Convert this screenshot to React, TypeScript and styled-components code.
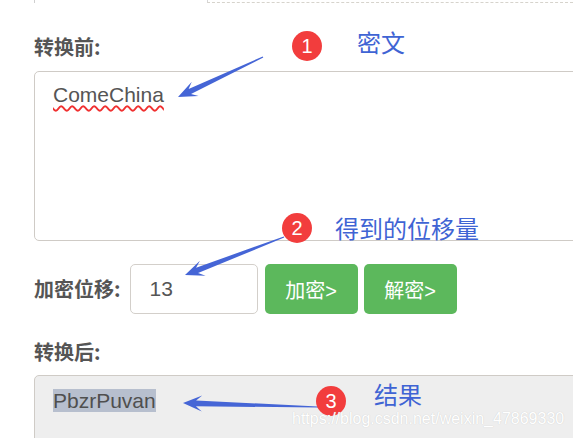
import React from "react";
import styled, { createGlobalStyle } from "styled-components";

type Pt = [number, number];

const arrowPoints = (tail: Pt, tip: Pt) => {
  const dx = tip[0] - tail[0];
  const dy = tip[1] - tail[1];
  const len = Math.hypot(dx, dy);
  const ux = dx / len;
  const uy = dy / len;
  const nx = -uy;
  const ny = ux;
  const at = (d: number, w: number): string =>
    `${(tip[0] - ux * d + nx * w).toFixed(1)},${(tip[1] - uy * d + ny * w).toFixed(1)}`;
  return [
    at(len, 0.6),
    at(13, 2.8),
    at(19, 8),
    at(0, 0),
    at(19, -8),
    at(13, -2.8),
    at(len, -0.6),
  ].join(" ");
};

const arrows: { tail: Pt; tip: Pt }[] = [
  { tail: [263, 57], tip: [178, 97] },
  { tail: [284, 237], tip: [185, 275] },
  { tail: [318, 407], tip: [183, 403] },
];

const marks = [
  { n: 1, x: 307, y: 46, text: "密文", tx: 357, ty: 30 },
  { n: 2, x: 297, y: 228, text: "得到的位移量", tx: 335, ty: 216 },
  { n: 3, x: 331, y: 401, text: "结果", tx: 374, ty: 382 },
];

const App = () => {
  return (
    <>
      <GlobalStyle />
      <Page>
        <TopRow>
          <TopStub />
          <TopDashed />
        </TopRow>

        <Label>转换前:</Label>
        <TextBox>
          <Misspelled>ComeChina</Misspelled>
        </TextBox>

        <ShiftRow>
          <Label>加密位移:</Label>
          <ShiftInput>13</ShiftInput>
          <Button>加密&gt;</Button>
          <Button>解密&gt;</Button>
        </ShiftRow>

        <AfterLabel>转换后:</AfterLabel>
        <TextBox $readOnly>
          <Selected>PbzrPuvan</Selected>
        </TextBox>

        <Overlay width="573" height="438" viewBox="0 0 573 438">
          {arrows.map((a, i) => (
            <polygon key={i} points={arrowPoints(a.tail, a.tip)} fill="#4565d6" />
          ))}
        </Overlay>

        {marks.map((m) => (
          <React.Fragment key={m.n}>
            <Badge style={{ left: m.x - 15, top: m.y - 15 }}>{m.n}</Badge>
            <Note style={{ left: m.tx, top: m.ty }}>{m.text}</Note>
          </React.Fragment>
        ))}

        <Watermark>https://blog.csdn.net/weixin_47869330</Watermark>
      </Page>
    </>
  );
};

export default App;

const GlobalStyle = createGlobalStyle`
  html, body {
    margin: 0;
    padding: 0;
    background: #ffffff;
    overflow: hidden;
  }
  body {
    font-family: "Liberation Sans", "Noto Sans CJK SC", sans-serif;
  }
`;

const Page = styled.div`
  position: relative;
  width: 573px;
  height: 438px;
  padding-left: 34px;
  box-sizing: border-box;
  overflow: hidden;
`;

const TopRow = styled.div`
  display: flex;
  height: 3px;
`;

const TopStub = styled.div`
  width: 172px;
  border-left: 1px solid #cfcfcf;
`;

const TopDashed = styled.div`
  flex: 1;
  border-left: 1px solid #d6d6d6;
  border-bottom: 1px dashed #d6d3cc;
`;

const Label = styled.div`
  margin-top: 32px;
  font-family: "Noto Sans CJK SC", sans-serif;
  font-size: 20px;
  line-height: 24px;
  font-weight: 700;
  color: #555555;
  white-space: nowrap;
`;

const AfterLabel = styled(Label)`
  margin-top: 26px;
`;

const TextBox = styled.div<{ $readOnly?: boolean }>`
  box-sizing: border-box;
  width: 600px;
  height: ${(p) => (p.$readOnly ? "100px" : "170px")};
  margin-top: ${(p) => (p.$readOnly ? "11px" : "12px")};
  padding: ${(p) => (p.$readOnly ? "10px" : "8px")} 18px;
  border: 1px solid #cfcbc6;
  border-radius: 5px;
  background: ${(p) => (p.$readOnly ? "#eeeeee" : "#ffffff")};
  font-family: "Liberation Sans", sans-serif;
  font-size: 21px;
  line-height: 30px;
  color: #555555;
`;

const Misspelled = styled.span`
  text-decoration: underline wavy #f03030;
  text-decoration-thickness: 1.5px;
  text-underline-offset: 3px;
`;

const Selected = styled.span`
  background: #b7bfce;
  color: #4f4f4f;
`;

const ShiftRow = styled.div`
  display: flex;
  align-items: center;
  gap: 7px;
  margin-top: 23px;

  ${Label} {
    margin-top: 0;
    margin-right: 2px;
  }
`;

const ShiftInput = styled.div`
  box-sizing: border-box;
  width: 128px;
  height: 50px;
  padding: 0 19px;
  border: 1px solid #d3cfca;
  border-radius: 5px;
  font-family: "Liberation Sans", sans-serif;
  font-size: 21px;
  line-height: 48px;
  color: #555555;
`;

const Button = styled.div`
  box-sizing: border-box;
  width: 93px;
  height: 50px;
  display: flex;
  align-items: center;
  justify-content: center;
  background: #5cb85c;
  border-radius: 5px;
  color: #ffffff;
  font-family: "Liberation Sans", "Noto Sans CJK SC", sans-serif;
  font-size: 20px;

  & + & {
    margin-left: -1px;
  }
`;

const Overlay = styled.svg`
  position: absolute;
  left: 0;
  top: 0;
  pointer-events: none;
`;

const Badge = styled.div`
  position: absolute;
  width: 30px;
  height: 30px;
  border-radius: 50%;
  background: #f23d3d;
  color: #ffffff;
  display: flex;
  align-items: center;
  justify-content: center;
  font-family: "Liberation Sans", sans-serif;
  font-size: 20px;
`;

const Note = styled.div`
  position: absolute;
  font-family: "Noto Sans CJK SC", sans-serif;
  font-size: 24px;
  line-height: 24px;
  color: #3f64d4;
  white-space: nowrap;
`;

const Watermark = styled.div`
  position: absolute;
  left: 292px;
  top: 409px;
  font-family: "Liberation Sans", sans-serif;
  font-size: 16px;
  line-height: 20px;
  color: #ffffff;
  text-shadow: 0 0 1px #c4c4c4;
  white-space: nowrap;
`;
